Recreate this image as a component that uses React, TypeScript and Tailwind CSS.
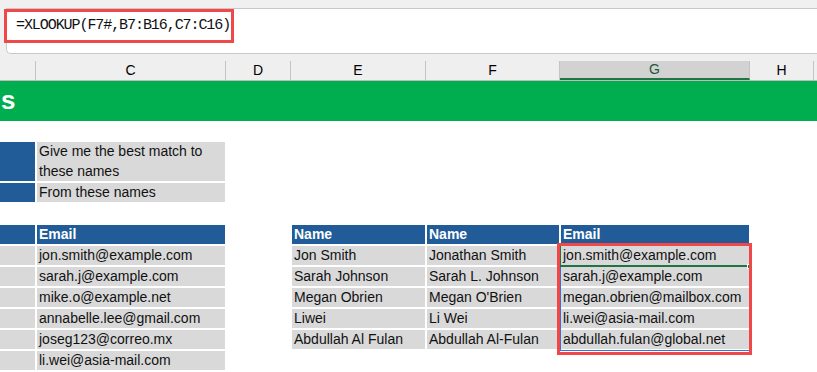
import React from 'react';

const cols = [
  { key: 'B', w: 'w-[37px]' },
  { key: 'C', w: 'w-[190px]' },
  { key: 'D', w: 'w-[65px]' },
  { key: 'E', w: 'w-[135px]' },
  { key: 'F', w: 'w-[134px]' },
  { key: 'G', w: 'w-[190px]' },
  { key: 'H', w: 'w-[64px]' },
  { key: 'I', w: 'w-[40px]' }
];

const leftEmails = [
  'jon.smith@example.com',
  'sarah.j@example.com',
  'mike.o@example.net',
  'annabelle.lee@gmail.com',
  'joseg123@correo.mx',
  'li.wei@asia-mail.com'
];

const matches = [
  ['Jon Smith', 'Jonathan Smith', 'jon.smith@example.com'],
  ['Sarah Johnson', 'Sarah L. Johnson', 'sarah.j@example.com'],
  ['Megan Obrien', "Megan O'Brien", 'megan.obrien@mailbox.com'],
  ['Liwei', 'Li Wei', 'li.wei@asia-mail.com'],
  ['Abdullah Al Fulan', 'Abdullah Al-Fulan', 'abdullah.fulan@global.net']
];

type Kind = 'blank' | 'gray' | 'blue';

function Cell({ w, kind, children }: { w: string; kind: Kind; children?: React.ReactNode }) {
  const bg = kind === 'blue' ? 'bg-[#215c98] text-white font-bold' : kind === 'gray' ? 'bg-[#d9d9d9] text-[#111]' : 'bg-white';
  return (
    <div className={`${w} shrink-0 border border-white px-[2px] leading-[19px] whitespace-nowrap overflow-hidden ${bg}`}>
      {children}
    </div>
  );
}

function Row({ cells }: { cells: { kind: Kind; text?: string }[] }) {
  return (
    <div className="flex h-[21px] -ml-px">
      {cells.map((c, i) => (
        <Cell key={i} w={cols[i].w} kind={c.kind}>
          {c.text}
        </Cell>
      ))}
    </div>
  );
}

export default function App() {
  const blank = { kind: 'blank' as Kind };
  return (
    <div className="w-[817px] h-[372px] overflow-hidden bg-white font-['Liberation_Sans',sans-serif] text-[14px]">
      {/* formula bar */}
      <div className="bg-[#f0f0f0] pt-[8px] pl-[6px] h-[54px]">
        <div className="relative h-[46px] bg-white border border-r-0 border-[#c8c8c8] rounded-bl-[5px]">
          <div className="absolute left-[-3px] top-0 w-[230px] h-[34px] border-[3px] border-[#f04848]" />
          <div className="pl-[9px] pt-[6px] font-['Liberation_Mono',monospace] text-[15px] tracking-[-1.07px] text-[#111]">
            =XLOOKUP(F7#,B7:B16,C7:C16)
          </div>
        </div>
      </div>

      {/* column headers */}
      <div className="flex h-[27px] bg-[#efefef] border-b border-[#bdbdbd] -ml-px">
        {cols.map((c) => (
          <div
            key={c.key}
            className={`${c.w} shrink-0 mt-[7px] h-[19px] flex items-center justify-center border-r border-[#c4c4c4] ${
              c.key === 'G' ? 'bg-[#d2d2d2] border-b-[2px] border-b-[#217346] text-[#1e5a3a]' : 'text-black'
            } ${c.key === 'B' ? 'text-transparent' : ''}`}
          >
            {c.key === 'B' || c.key === 'I' ? '' : c.key}
          </div>
        ))}
      </div>

      {/* title band */}
      <div className="h-[40px] bg-[#00ad4f] flex items-center pl-[1px]">
        <span className="text-white font-bold text-[26px] leading-none -mt-[2px]">s</span>
      </div>

      <div className="relative">
        <div className="h-[20px]" />
        <div className="flex h-[41px] -ml-px">
          <Cell w="w-[37px]" kind="blue" />
          <div className="w-[190px] shrink-0 border border-white bg-[#d9d9d9] px-[2px] leading-[19.5px] text-[#111]">
            Give me the best match to
            <br />
            these names
          </div>
        </div>
        <Row cells={[{ kind: 'blue' }, { kind: 'gray', text: 'From these names' }]} />
        <div className="h-[21px]" />
        <Row
          cells={[
            { kind: 'blue' },
            { kind: 'blue', text: 'Email' },
            blank,
            { kind: 'blue', text: 'Name' },
            { kind: 'blue', text: 'Name' },
            { kind: 'blue', text: 'Email' }
          ]}
        />
        {leftEmails.map((email, i) => {
          const m = matches[i];
          return (
            <Row
              key={email}
              cells={
                m
                  ? [
                      { kind: 'gray' },
                      { kind: 'gray', text: email },
                      blank,
                      { kind: 'gray', text: m[0] },
                      { kind: 'gray', text: m[1] },
                      { kind: 'gray', text: m[2] }
                    ]
                  : [{ kind: 'gray' }, { kind: 'gray', text: email }]
              }
            />
          );
        })}

        {/* spill range + active cell */}
        <div className="absolute left-[560px] top-[124px] w-[190px] h-[106px] border border-[#3b6fd1] pointer-events-none" />
        <div className="absolute left-[559px] top-[124px] w-[191px] h-[22px] border-l-2 border-b-2 border-[#217346]" />
        <div className="absolute left-[747px] top-[143px] w-[5px] h-[5px] bg-[#217346] border border-white" />
        <div className="absolute left-[557px] top-[122px] w-[195px] h-[112px] border-[3px] border-[#f04848]" />
      </div>
    </div>
  );
}
